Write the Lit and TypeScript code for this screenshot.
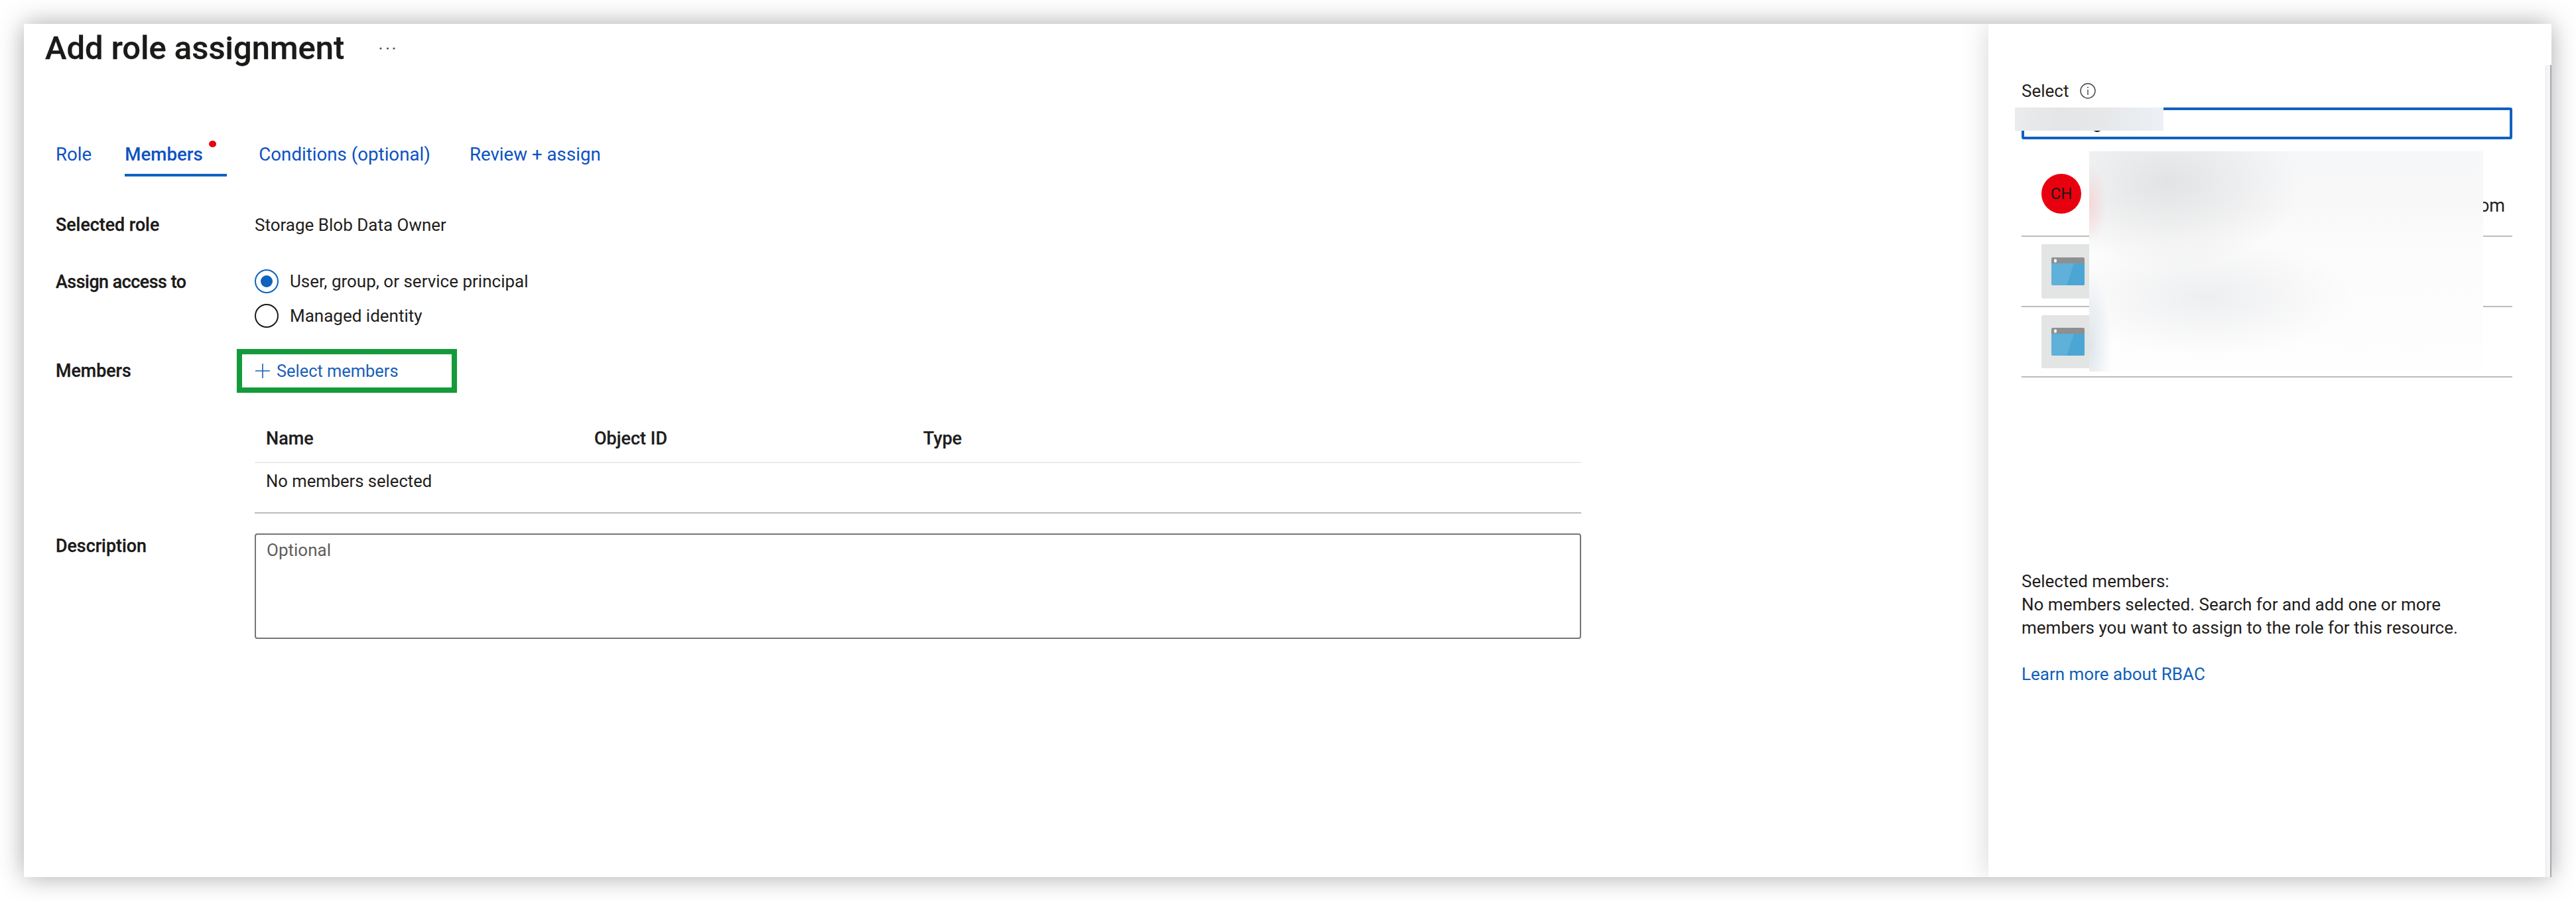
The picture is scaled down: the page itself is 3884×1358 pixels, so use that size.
import { LitElement, html, css } from "lit";
import { customElement } from "lit/decorators.js";

const appIcon = html`<svg class="app-icon" viewBox="0 0 50 42" width="50" height="42" aria-hidden="true">
  <path d="M2 0H48a2 2 0 0 1 2 2V9H0V2a2 2 0 0 1 2-2Z" fill="#8e8f90"/>
  <path d="M0 9H50V40a2 2 0 0 1-2 2H2a2 2 0 0 1-2-2Z" fill="#5fb1da"/>
  <path d="M34 9H50V40a2 2 0 0 1-2 2H23Z" fill="#4ca6d3"/>
  <ellipse cx="6" cy="5" rx="2" ry="2.8" fill="#fff"/>
</svg>`;

@customElement("app-root")
export class AppRoot extends LitElement {
  static styles = css`
    :host { display: block; width: 3884px; height: 1358px; box-sizing: border-box; padding: 36px 37px 36px 36px;
      background: #fff; font-family: Roboto, "Noto Sans", sans-serif; font-size: 26px; line-height: 34px; color: #1f1e1d; overflow: hidden; }
    .window { display: flex; height: 1286px; background: #fff; box-shadow: 0 0 36px rgba(0,0,0,.34); }
    .main { flex: 1; min-width: 0; position: relative; }
    .title-row { display: flex; align-items: center; padding: 9px 0 0 32px; }
    h1 { margin: 0; font-size: 48.9px; line-height: 56px; font-weight: 500; color: #1b1a19; -webkit-text-stroke: .3px #1b1a19; }
    .more { margin-left: 53px; display: block; }
    .tabs { display: flex; margin: 115px 0 0 48px; color: #0c52c2; font-size: 27.7px; }
    .tab { padding-bottom: 12px; border-bottom: 4px solid transparent; margin-right: 50px; }
    .tab.active { width: 154px; margin-right: 48px; font-weight: 500; border-bottom-color: #0f62bf; position: relative; }
    .tab.cond { margin-right: 59px; }
    .badge { position: absolute; left: 127px; top: -4px; width: 11px; height: 10px; border-radius: 50%; background: #e8000f; }
    .form { margin: 56px 0 0 48px; width: 2300px; }
    .row { display: grid; grid-template-columns: 300px 2000px; }
    .row.access { margin-top: 50px; }
    .row.members { margin-top: 32px; align-items: center; }
    .row.desc { margin-top: 30px; }
    .label { font-weight: 500; font-size: 26.8px; color: #1b1a19; -webkit-text-stroke: .3px #1b1a19; }
    .label.assign { padding-top: 2px; letter-spacing: -.45px; }
    .label.top { padding-top: 2px; }
    .radios { display: flex; flex-direction: column; gap: 16px; }
    .radio { display: flex; align-items: center; height: 36px; gap: 17px; }
    .dot { width: 36px; height: 36px; box-sizing: border-box; border: 2px solid #1b1a19; border-radius: 50%; display: flex; align-items: center; justify-content: center; }
    .dot.on { border: 2.5px solid #0f62bf; }
    .dot.on::after { content: ""; width: 18px; height: 18px; border-radius: 50%; background: #0f62bf; }
    .select-btn { margin-left: -27px; width: 332px; height: 66px; box-sizing: border-box; border: 8px solid #149a3a; display: flex; align-items: center; gap: 9px; padding-left: 19px; color: #1a5fb8; font-size: 25.4px; }
    .table-wrap { margin-left: 300px; width: 2000px; margin-top: 34px; }
    .thead, .tbody { display: grid; grid-template-columns: 495px 496px 1fr; padding-left: 17px; }
    .thead { height: 70px; align-items: center; border-bottom: 2px solid #ececec; font-weight: 500; font-size: 27px; -webkit-text-stroke: .2px #1b1a19; }
    .tbody { height: 76px; padding-top: 10px; box-sizing: border-box; border-bottom: 2px solid #bcbcbc; font-size: 25.6px; }
    .textarea { height: 159px; box-sizing: border-box; border: 2px solid #757575; border-radius: 4px; padding: 7px 16px 0; color: #605e5c; line-height: 32px; }

    .panel { width: 849px; flex: none; display: flex; position: relative; background: #fff; box-shadow: 0 0 40px rgba(0,0,0,.17); clip-path: inset(0 0 0 -60px); }
    .panel-body { flex: 1; min-width: 0; padding: 84px 0 0 50px; box-sizing: border-box; }
    .scroll { width: 9px; margin-top: 62px; flex: none; box-sizing: border-box; background: #f5f5f7; border-right: 2px solid #a9a9ad; border-left: 1px solid #e4e4e6; }
    .select-label { display: flex; align-items: center; gap: 17px; }
    .info { display: block; }
    .input { width: 740px; height: 48px; box-sizing: border-box; margin-top: 8px; border: 4px solid #0f62bf; border-radius: 3px; padding: 3px 0 0 103px; line-height: 32px; color: #1b1a19; }
    .list { width: 740px; margin-top: 19px; }
    .item { height: 106px; box-sizing: border-box; border-bottom: 2px solid #bcbcbc; padding-left: 30px; display: flex; align-items: center; }
    .item.first { height: 128px; }
    .avatar { width: 60px; height: 60px; flex: none; border-radius: 50%; background: #e8000f; color: #1b1a19; display: flex; align-items: center; justify-content: center; font-size: 24px; }
    .tail { margin-left: auto; margin-right: 11px; align-self: flex-end; padding-bottom: 28px; font-size: 27px; }
    .square { width: 80px; height: 80px; flex: none; border-radius: 2px; background: #e3e4e4; display: flex; align-items: center; justify-content: center; }
    .square.a { height: 82px; }
    .app-icon { display: block; }
    .summary { margin-top: 290px; width: 740px; line-height: 35px; }
    .link { display: block; margin-top: 35px; color: #1060b8; line-height: 35px; }
    .mask { position: absolute; }
    .mask.search { left: 40px; top: 126px; width: 224px; height: 35px; background: linear-gradient(90deg, #e9ebed 0%, #e3e5e7 30%, #e6e8ea 60%, #edf0f5 100%); }
    .mask.people { left: 152px; top: 192px; width: 594px; height: 332px;
      background:
        radial-gradient(ellipse 26px 60px at 0 24%, rgba(245,205,205,.7), rgba(245,205,205,0) 100%),
        radial-gradient(ellipse 34px 110px at 0 88%, rgba(212,222,230,.8), rgba(212,222,230,0) 100%),
        radial-gradient(ellipse 200px 130px at 20% 14%, rgba(225,226,227,.95), rgba(225,226,227,0) 100%),
        radial-gradient(ellipse 220px 90px at 30% 66%, rgba(236,237,239,.9), rgba(236,237,239,0) 100%),
        linear-gradient(180deg, #f6f7f8 0%, #f8f8f9 25%, #fcfcfc 45%, #fefefe 100%); }
  `;

  render() {
    return html`<div class="window">
      <div class="main">
        <div class="title-row">
          <h1>Add role assignment</h1>
          <svg class="more" width="24" height="6" viewBox="0 0 24 6" aria-hidden="true"><circle cx="2" cy="3" r="1.6" fill="#555"/><circle cx="12.5" cy="3" r="1.6" fill="#555"/><circle cx="22" cy="3" r="1.6" fill="#555"/></svg>
        </div>
        <div class="tabs">
          <div class="tab">Role</div>
          <div class="tab active">Members<i class="badge"></i></div>
          <div class="tab cond">Conditions (optional)</div>
          <div class="tab">Review + assign</div>
        </div>
        <div class="form">
          <div class="row"><div class="label">Selected role</div><div>Storage Blob Data Owner</div></div>
          <div class="row access">
            <div class="label assign">Assign access to</div>
            <div class="radios">
              <div class="radio"><span class="dot on"></span>User, group, or service principal</div>
              <div class="radio"><span class="dot"></span>Managed identity</div>
            </div>
          </div>
          <div class="row members">
            <div class="label">Members</div>
            <div class="select-btn">
              <svg width="24" height="24" viewBox="0 0 24 24" aria-hidden="true"><path d="M12 1V23M1 12H23" stroke="#1a5fb8" stroke-width="1.6" fill="none"/></svg>
              Select members
            </div>
          </div>
          <div class="table-wrap">
            <div class="thead"><div>Name</div><div>Object ID</div><div>Type</div></div>
            <div class="tbody"><div>No members selected</div></div>
          </div>
          <div class="row desc">
            <div class="label top">Description</div>
            <div class="textarea">Optional</div>
          </div>
        </div>
      </div>
      <aside class="panel">
        <div class="panel-body">
          <div class="select-label">Select
            <svg class="info" width="24" height="24" viewBox="0 0 24 24" aria-hidden="true"><circle cx="12" cy="12" r="11" fill="none" stroke="#444" stroke-width="1.4"/><path d="M12 10V18" stroke="#444" stroke-width="1.4"/><circle cx="12" cy="6.8" r="1" fill="#444"/></svg>
          </div>
          <div class="input">g</div>
          <div class="list">
            <div class="item first"><div class="avatar">CH</div><div class="tail">om</div></div>
            <div class="item"><div class="square a">${appIcon}</div></div>
            <div class="item"><div class="square">${appIcon}</div></div>
          </div>
          <div class="summary">
            <div>Selected members:</div>
            <div>No members selected. Search for and add one or more members you want to assign to the role for this resource.</div>
            <a class="link">Learn more about RBAC</a>
          </div>
        </div>
        <div class="scroll"></div>
        <div class="mask search"></div>
        <div class="mask people"></div>
      </aside>
    </div>`;
  }
}
